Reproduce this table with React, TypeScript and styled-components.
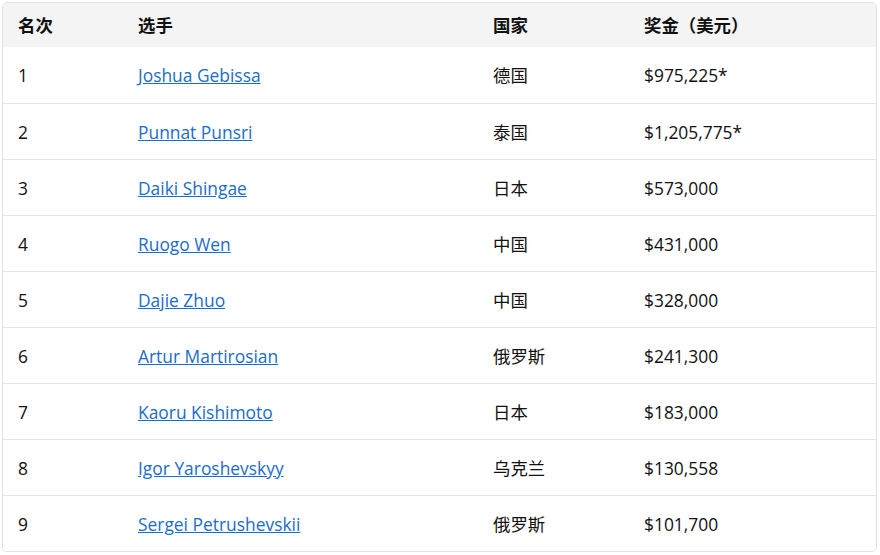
import React from "react";
import styled, { createGlobalStyle } from "styled-components";

const Global = createGlobalStyle`
  html, body { margin: 0; padding: 0; background: #fff; }
  body { font-family: "Open Sans", "Noto Sans CJK SC", sans-serif; color: #111; }
`;

const Wrap = styled.div`
  padding: 2px 3px 0 2px;
`;

const Table = styled.div`
  border: 1px solid #e2e2e2;
  border-radius: 5px;
  overflow: hidden;
  width: 873px;
`;

const Row = styled.div<{ $head?: boolean; $first?: boolean }>`
  box-sizing: border-box;
  display: grid;
  grid-template-columns: 120px 355px 151px 1fr;
  height: ${(p) => (p.$head ? "44px" : "56px")};
  background: ${(p) => (p.$head ? "#f4f4f4" : "#fff")};
  border-top: ${(p) => (p.$head || p.$first ? "none" : "1px solid #e5e5e5")};
  align-items: center;
`;

const Cell = styled.div<{ $head?: boolean }>`
  padding-left: 15px;
  font-size: 17.4px;
  line-height: 24px;
  font-weight: ${(p) => (p.$head ? 700 : 400)};
  font-family: ${(p) =>
    p.$head ? `"Noto Sans CJK SC", "Open Sans", sans-serif` : `"Open Sans", "Noto Sans CJK SC", sans-serif`};
  white-space: nowrap;
`;

const Link = styled.a`
  color: #1a6dcc;
  text-decoration: underline;
  text-underline-offset: 1px;
`;

const rows = [
  ["1", "Joshua Gebissa", "德国", "$975,225*"],
  ["2", "Punnat Punsri", "泰国", "$1,205,775*"],
  ["3", "Daiki Shingae", "日本", "$573,000"],
  ["4", "Ruogo Wen", "中国", "$431,000"],
  ["5", "Dajie Zhuo", "中国", "$328,000"],
  ["6", "Artur Martirosian", "俄罗斯", "$241,300"],
  ["7", "Kaoru Kishimoto", "日本", "$183,000"],
  ["8", "Igor Yaroshevskyy", "乌克兰", "$130,558"],
  ["9", "Sergei Petrushevskii", "俄罗斯", "$101,700"],
];

export default function App() {
  return (
    <Wrap>
      <Global />
      <Table>
        <Row $head>
          <Cell $head>名次</Cell>
          <Cell $head>选手</Cell>
          <Cell $head>国家</Cell>
          <Cell $head>奖金（美元）</Cell>
        </Row>
        {rows.map((r, i) => (
          <Row key={r[0]} $first={i === 0}>
            <Cell>{r[0]}</Cell>
            <Cell>
              <Link href="#">{r[1]}</Link>
            </Cell>
            <Cell>{r[2]}</Cell>
            <Cell>{r[3]}</Cell>
          </Row>
        ))}
      </Table>
    </Wrap>
  );
}
